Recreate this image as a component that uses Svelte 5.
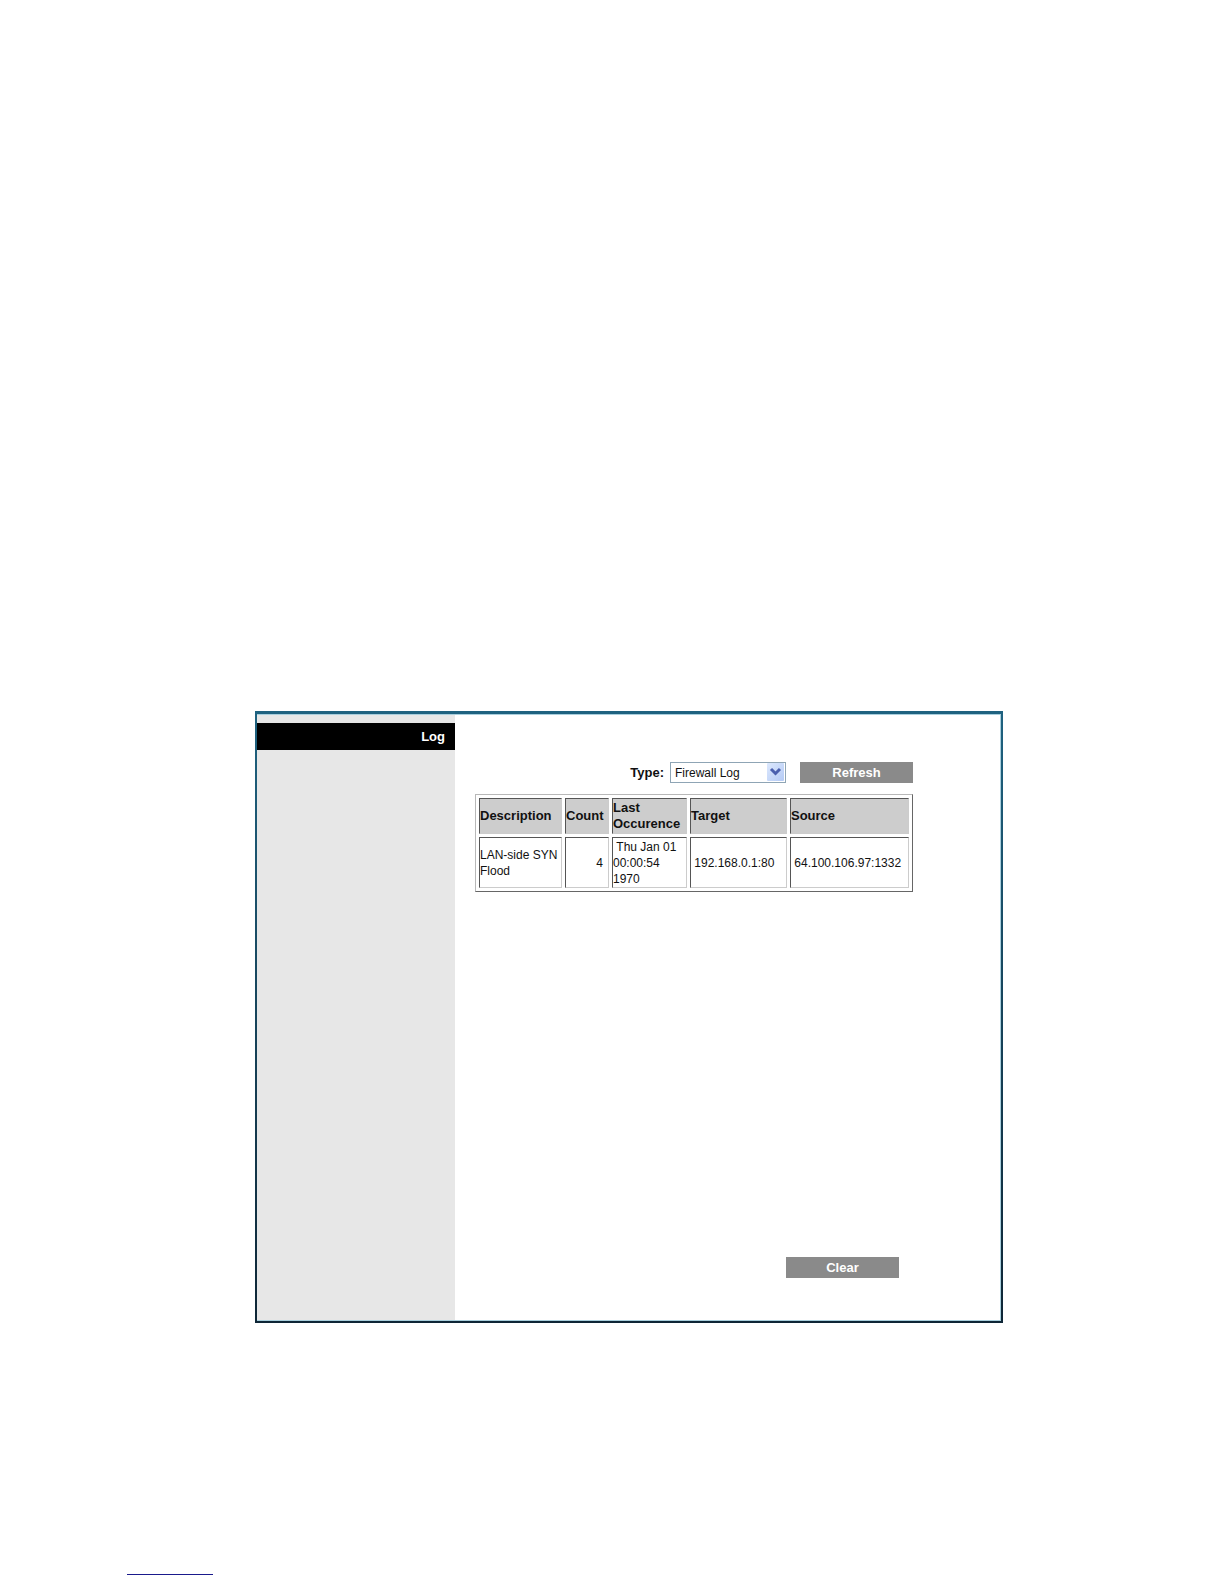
<script>
  let type = $state('Firewall Log');
  let rows = $state([
    {
      description: 'LAN-side SYN Flood',
      count: 4,
      last: 'Thu Jan 01 00:00:54 1970',
      target: '192.168.0.1:80',
      source: '64.100.106.97:1332'
    }
  ]);
</script>

<div class="page">
  <main class="panel">
    <aside class="sidebar">
      <h1>Log</h1>
    </aside>
    <section class="content">
      <div class="toolbar">
        <label for="log-type">Type:</label>
        <div class="picker">
          <select id="log-type" bind:value={type}>
            <option>Firewall Log</option>
          </select>
          <svg class="arrow" viewBox="0 0 17 18" aria-hidden="true">
            <defs>
              <linearGradient id="face" x1="0" y1="0" x2="1" y2="1">
                <stop offset="0" stop-color="#dce8fd" />
                <stop offset="1" stop-color="#b4caf5" />
              </linearGradient>
            </defs>
            <rect width="17" height="18" rx="1" fill="url(#face)" />
            <path d="M4 6 8.5 10.5 13 6" fill="none" stroke="#4a5fae" stroke-width="3" />
          </svg>
        </div>
        <button type="button">Refresh</button>
      </div>
      <table>
        <colgroup>
          <col class="c-description" /><col class="c-count" /><col class="c-last" /><col class="c-target" /><col />
        </colgroup>
        <thead>
          <tr>
            <th>Description</th>
            <th>Count</th>
            <th>Last Occurence</th>
            <th>Target</th>
            <th>Source</th>
          </tr>
        </thead>
        <tbody>
          {#each rows as row}
            <tr>
              <td>{row.description}</td>
              <td class="count">{row.count}</td>
              <td>&nbsp;{row.last}</td>
              <td>&nbsp;{row.target}</td>
              <td>&nbsp;{row.source}</td>
            </tr>
          {/each}
        </tbody>
      </table>
      <div class="actions">
        <button type="button" onclick={() => (rows = [])}>Clear</button>
      </div>
    </section>
  </main>
  <div class="rule"></div>
</div>

<style>
  :global(body) {
    background: #fff;
  }
  .page {
    box-sizing: border-box;
    min-height: 100vh;
    display: flex;
    flex-direction: column;
    padding: 711px 221px 9px 255px;
    font-family: 'Liberation Sans', Arial, sans-serif;
    font-size: 12px;
    line-height: 16px;
    color: #111;
  }
  .panel {
    box-sizing: border-box;
    display: flex;
    min-height: 612px;
    border: 2px solid;
    border-top-width: 3px;
    border-image: linear-gradient(#1f6280, #0e2636) 3 2 2 2;
    box-shadow: inset 0 0 0 1px #a9cfdd;
  }
  .sidebar {
    width: 198px;
    flex: none;
    padding-top: 9px;
    background: #e7e7e7;
    box-shadow: inset 0 1px #a9cfdd, inset 0 -1px #a9cfdd;
  }
  h1 {
    margin: 0;
    padding: 0 10px 0 0;
    background: #000;
    color: #fff;
    font-size: 13px;
    line-height: 27px;
    text-align: right;
  }
  .content {
    flex: 1;
    min-width: 0;
    display: flex;
    flex-direction: column;
    padding: 48px 88px 43px 20px;
  }
  .toolbar {
    display: flex;
    justify-content: flex-end;
    align-items: center;
  }
  label {
    font-size: 13px;
    font-weight: bold;
    margin-right: 6px;
  }
  .picker {
    position: relative;
    width: 116px;
    margin-right: 14px;
  }
  select {
    display: block;
    box-sizing: border-box;
    width: 100%;
    height: 21px;
    margin: 0;
    padding: 0 20px 0 4px;
    appearance: none;
    border: 1px solid #8fa5b5;
    border-radius: 0;
    background: #fff;
    color: #111;
    font: inherit;
  }
  .arrow {
    position: absolute;
    top: 1px;
    right: 2px;
    width: 17px;
    height: 18px;
    pointer-events: none;
  }
  button {
    width: 113px;
    height: 21px;
    margin: 0;
    padding: 0;
    border: 0;
    border-radius: 0;
    background: #8a8a8a;
    color: #fff;
    font: bold 13px/16px 'Liberation Sans', Arial, sans-serif;
  }
  table {
    width: 100%;
    margin-top: 11px;
    table-layout: fixed;
    border: 1px solid;
    border-color: #b8b8b8 #666 #666 #b8b8b8;
    border-collapse: separate;
    border-spacing: 3px;
  }
  .c-description {
    width: 83px;
  }
  .c-count {
    width: 44px;
  }
  .c-last {
    width: 75px;
  }
  .c-target {
    width: 97px;
  }
  th,
  td {
    padding: 1px 0;
    border: 1px solid;
    border-color: #555 #ccc #ccc #555;
    text-align: left;
    vertical-align: middle;
  }
  td {
    padding-bottom: 0;
  }
  th {
    background: #cdcdcd;
    font-size: 13px;
  }
  .count {
    padding-right: 5px;
    text-align: right;
  }
  .actions {
    display: flex;
    justify-content: flex-end;
    margin-top: auto;
    padding-right: 14px;
  }
  .rule {
    width: 86px;
    height: 1px;
    margin: auto 0 0 -128px;
    background: #1a1a8c;
  }
</style>
